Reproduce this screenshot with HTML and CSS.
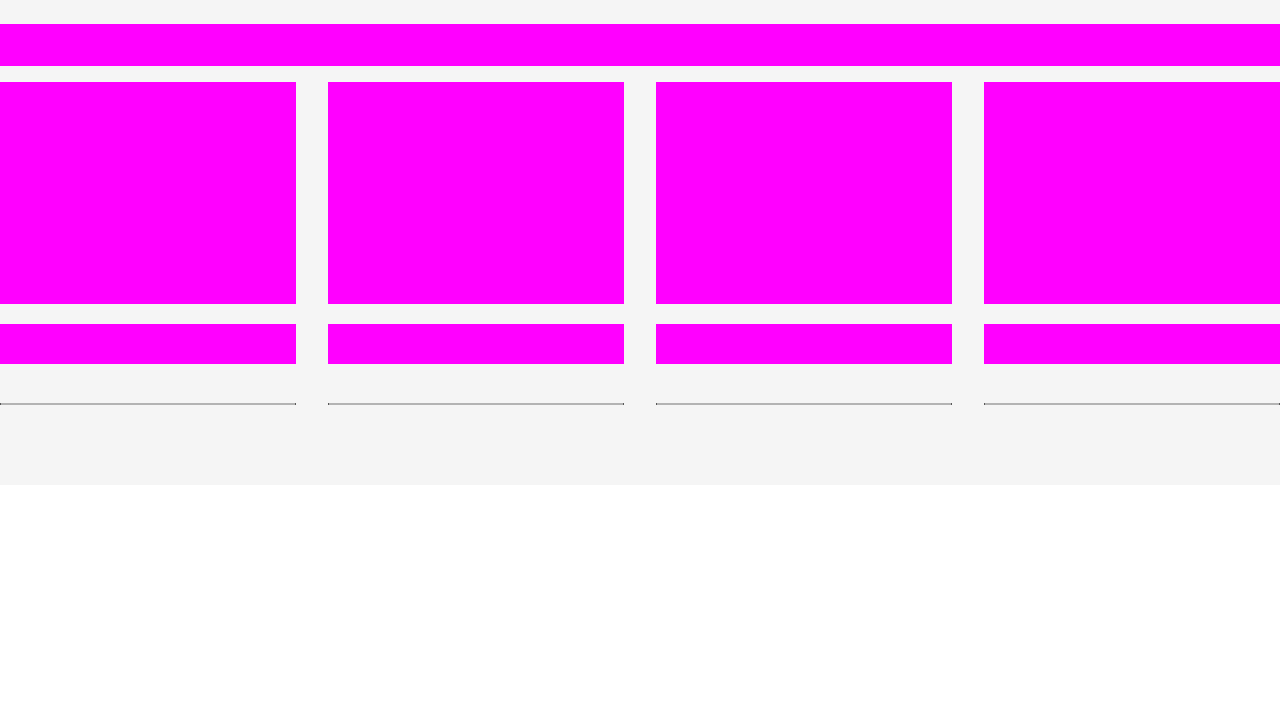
FILE: index.html
```html
<!DOCTYPE html>
<html>
<head>
<meta charset="utf-8">
<link rel="stylesheet" href="styles.css">
</head>
<body>
<section class="section">
  <div class="heading"></div>
  <div class="grid">
    <div class="card"><div class="media"></div><div class="title"></div><hr class="rule"></div>
    <div class="card"><div class="media"></div><div class="title"></div><hr class="rule"></div>
    <div class="card"><div class="media"></div><div class="title"></div><hr class="rule"></div>
    <div class="card"><div class="media"></div><div class="title"></div><hr class="rule"></div>
  </div>
</section>
</body>
</html>
```
FILE: styles.css
```css
html, body {
  margin: 0;
  padding: 0;
  background: #ffffff;
  font-family: "Liberation Sans", Arial, sans-serif;
}
.section {
  background: #f5f5f5;
  padding: 24px 0 80px;
}
.heading {
  height: 42px;
  background: #ff00ff;
  margin-bottom: 16px;
}
.grid {
  display: grid;
  grid-template-columns: repeat(4, 1fr);
  column-gap: 32px;
}
.card {
  display: flex;
  flex-direction: column;
}
.media {
  height: 222px;
  background: #ff00ff;
}
.title {
  height: 40px;
  margin-top: 20px;
  background: #ff00ff;
}
.rule {
  margin: 39px 0 0;
  height: 0;
  border-style: solid;
  border-width: 1px;
  border-color: #b3b3b3 #000000 #b3b3b3 #000000;
}
```
